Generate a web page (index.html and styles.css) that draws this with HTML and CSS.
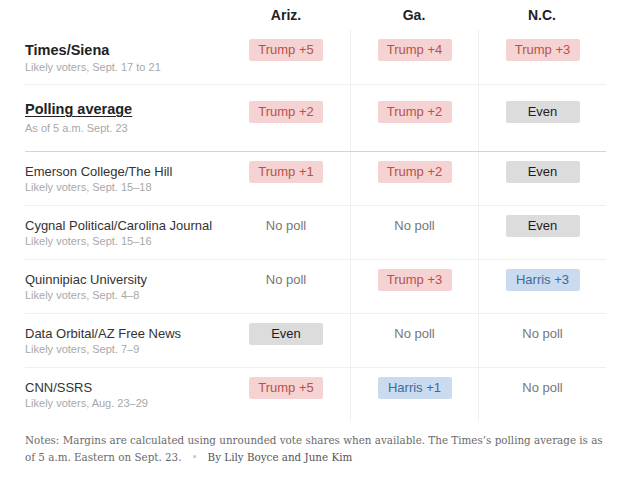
FILE: index.html
```html
<!DOCTYPE html>
<html>
<head>
<meta charset="utf-8">
<link rel="stylesheet" href="styles.css">
</head>
<body>
<div class="wrap">
  <div class="table">
    <div class="row head">
      <div class="label"></div>
      <div class="cell">Ariz.</div>
      <div class="cell">Ga.</div>
      <div class="cell">N.C.</div>
    </div>
    <div class="row r-times">
      <div class="label"><div class="title big">Times/Siena</div><div class="sub">Likely voters, Sept. 17 to 21</div></div>
      <div class="cell"><span class="pill rep">Trump +5</span></div>
      <div class="cell line"><span class="pill rep">Trump +4</span></div>
      <div class="cell line"><span class="pill rep">Trump +3</span></div>
    </div>
    <div class="row r-avg">
      <div class="label"><div class="title big under">Polling average</div><div class="sub">As of 5 a.m. Sept. 23</div></div>
      <div class="cell"><span class="pill rep">Trump +2</span></div>
      <div class="cell line"><span class="pill rep">Trump +2</span></div>
      <div class="cell line"><span class="pill even">Even</span></div>
    </div>
    <div class="row">
      <div class="label"><div class="title">Emerson College/The Hill</div><div class="sub">Likely voters, Sept. 15–18</div></div>
      <div class="cell"><span class="pill rep">Trump +1</span></div>
      <div class="cell line"><span class="pill rep">Trump +2</span></div>
      <div class="cell line"><span class="pill even">Even</span></div>
    </div>
    <div class="row">
      <div class="label"><div class="title">Cygnal Political/Carolina Journal</div><div class="sub">Likely voters, Sept. 15–16</div></div>
      <div class="cell"><span class="none">No poll</span></div>
      <div class="cell line"><span class="none">No poll</span></div>
      <div class="cell line"><span class="pill even">Even</span></div>
    </div>
    <div class="row">
      <div class="label"><div class="title">Quinnipiac University</div><div class="sub">Likely voters, Sept. 4–8</div></div>
      <div class="cell"><span class="none">No poll</span></div>
      <div class="cell line"><span class="pill rep">Trump +3</span></div>
      <div class="cell line"><span class="pill dem">Harris +3</span></div>
    </div>
    <div class="row">
      <div class="label"><div class="title">Data Orbital/AZ Free News</div><div class="sub">Likely voters, Sept. 7–9</div></div>
      <div class="cell"><span class="pill even">Even</span></div>
      <div class="cell line"><span class="none">No poll</span></div>
      <div class="cell line"><span class="none">No poll</span></div>
    </div>
    <div class="row last">
      <div class="label"><div class="title">CNN/SSRS</div><div class="sub">Likely voters, Aug. 23–29</div></div>
      <div class="cell"><span class="pill rep">Trump +5</span></div>
      <div class="cell line"><span class="pill dem">Harris +1</span></div>
      <div class="cell line"><span class="none">No poll</span></div>
    </div>
  </div>
  <p class="notes">Notes: Margins are calculated using unrounded vote shares when available. The Times’s polling average is as of 5 a.m. Eastern on Sept. 23.<span class="dot">•</span><span class="byline">By Lily Boyce and June Kim</span></p>
</div>
</body>
</html>
```

FILE: styles.css
```css
html, body {
  margin: 0;
  padding: 0;
  background: #fff;
}
.wrap {
  padding-left: 25px;
  width: 581px;
  font-family: "Liberation Sans", Arial, sans-serif;
}
.row {
  display: grid;
  grid-template-columns: 197px 128px 128px 128px;
  box-sizing: border-box;
  height: 54px;
  border-bottom: 1px solid #efefef;
}
.row.head {
  height: 30px;
  border-bottom: none;
}
.head .cell {
  font-weight: bold;
  font-size: 14px;
  line-height: 30px;
  color: #222;
  text-align: center;
  padding-top: 0;
}
.row.r-times { height: 55px; }
.row.r-avg { height: 67px; border-bottom: 1px solid #d4d4d4; }
.row.last { height: 53px; border-bottom: none; }
.label {
  padding-top: 12px;
}
.title {
  font-size: 13px;
  line-height: 16px;
  color: #333;
}
.title.big {
  font-size: 14.5px;
  line-height: 18px;
  font-weight: bold;
  color: #222;
}
.title.under {
  text-decoration: underline;
  text-decoration-thickness: 1px;
  text-underline-offset: 2px;
}
.sub {
  font-size: 11px;
  line-height: 14px;
  color: #a8a8a8;
}
.r-times .label { padding-top: 11px; }
.r-times .sub { margin-top: 1px; }
.r-avg .label { padding-top: 15px; }
.r-avg .sub { margin-top: 3px; }
.cell {
  display: flex;
  justify-content: center;
  align-items: flex-start;
  padding-top: 9px;
}
.r-avg .cell { padding-top: 16px; }
.cell.line {
  border-left: 1px solid #efefef;
}
.pill {
  display: block;
  box-sizing: border-box;
  width: 74px;
  height: 22px;
  line-height: 22px;
  text-align: center;
  font-size: 13px;
  border-radius: 2px;
}
.pill.rep { background: #f5d3d3; color: #b8514e; }
.pill.dem { background: #cadbf0; color: #3d6a9c; }
.pill.even { background: #dcdcdc; color: #1e1e1e; }
.none {
  display: block;
  line-height: 22px;
  font-size: 13px;
  color: #777;
}
.notes {
  margin: 11px 0 0 0;
  font-family: "DejaVu Serif", Georgia, serif;
  font-size: 10.35px;
  line-height: 17px;
  color: #6a6a6a;
}
.dot {
  color: #c8c8c8;
  margin: 0 10px;
}
.byline {
  color: #555;
}
```
